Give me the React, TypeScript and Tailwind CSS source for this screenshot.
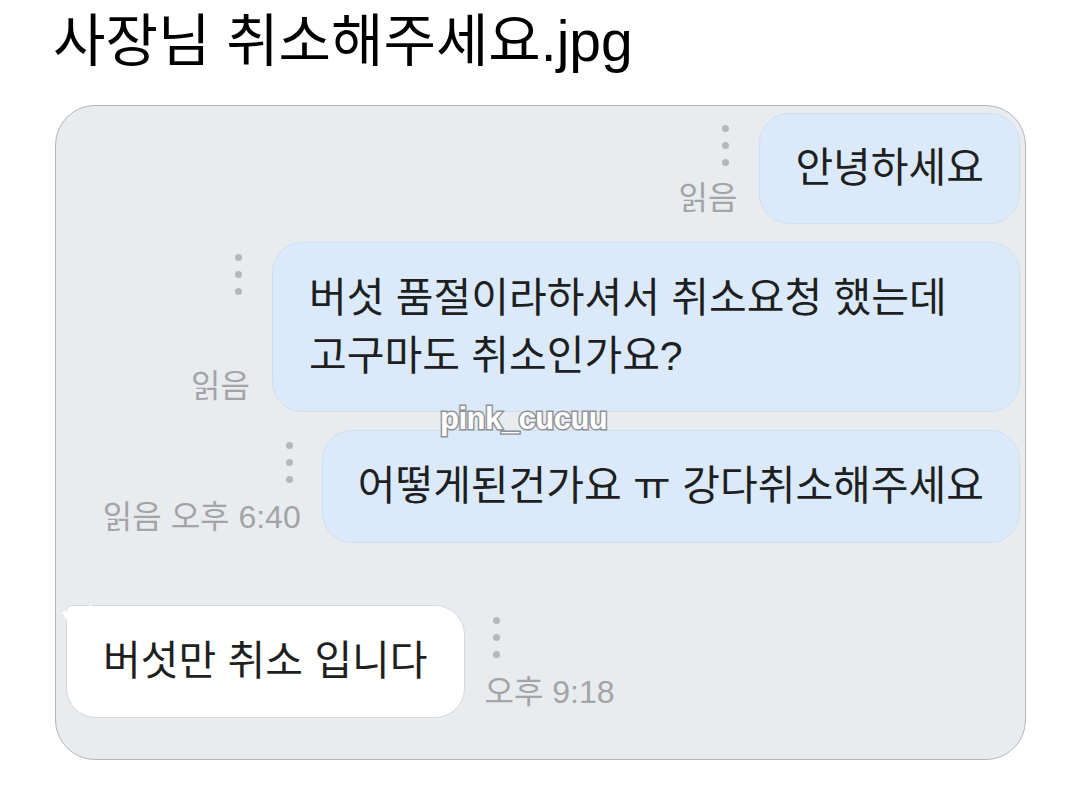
const font = { fontFamily: '"Liberation Sans", "Noto Sans CJK KR", sans-serif' };

function Dots({ side }: { side: "left" | "right" }) {
  return (
    <div className={`flex flex-col gap-[10px] ${side === "right" ? "mr-[8px]" : "ml-[8px]"}`}>
      <span className="block size-[7px] rounded-full bg-[#b4b7bb]" />
      <span className="block size-[7px] rounded-full bg-[#b4b7bb]" />
      <span className="block size-[7px] rounded-full bg-[#b4b7bb]" />
    </div>
  );
}

function Meta({ text, side }: { text: string; side: "left" | "right" }) {
  return (
    <div
      className={`flex flex-col justify-between self-stretch pt-[12px] pb-[10px] ${
        side === "right" ? "items-end" : "items-start"
      }`}
    >
      <Dots side={side} />
      <span className="text-[32px] leading-[32px] text-[#a2a4a7] whitespace-nowrap">{text}</span>
    </div>
  );
}

export default function App() {
  return (
    <div className="w-[1080px] h-[799px] bg-white text-[#1e1f21]" style={font}>
      <h1 className="pl-[53px] pt-[6px] text-[57px] leading-[70px] font-normal text-black">
        사장님 취소해주세요.jpg
      </h1>
      <div className="relative ml-[55px] mt-[29px] flex h-[655px] w-[971px] flex-col rounded-[40px] border border-[#b3b6ba] bg-[#e9ecef] pt-[7px] pl-[10px] pr-[5px]">
        <div className="flex justify-end gap-[22px]">
          <Meta text="읽음" side="right" />
          <div className="flex h-[111px] items-center rounded-[30px] border border-[#cfdff0] bg-[#dbeafb] px-[35px] text-[41px]">
            안녕하세요
          </div>
        </div>
        <div className="mt-[18px] flex justify-end gap-[22px]">
          <Meta text="읽음" side="right" />
          <div className="flex h-[170px] w-[748px] items-center rounded-[30px] border border-[#cfdff0] bg-[#dbeafb] px-[36px] text-[41px] leading-[58px]">
            <p>
              버섯 품절이라하셔서 취소요청 했는데
              <br />
              고구마도 취소인가요?
            </p>
          </div>
        </div>
        <div className="mt-[18px] flex justify-end gap-[21px]">
          <Meta text="읽음 오후 6:40" side="right" />
          <div className="flex h-[113px] items-center rounded-[30px] border border-[#cfdff0] bg-[#dbeafb] px-[35px] text-[41px]">
            어떻게된건가요 ㅠ 강다취소해주세요
          </div>
        </div>
        <div className="mt-[62px] flex justify-start gap-[20px]">
          <div className="relative flex h-[113px] items-center rounded-[30px] rounded-tl-[6px] border border-[#d5d8dc] bg-white px-[36px] text-[41px]">
            <svg className="absolute -left-[5px] -top-[1px]" width="30" height="16" viewBox="0 0 30 16">
              <path d="M0 7 L30 0 L30 16 L5 16 Z" fill="#ffffff" />
            </svg>
            버섯만 취소 입니다
          </div>
          <Meta text="오후 9:18" side="left" />
        </div>
        <span
          className="absolute left-[384px] top-[290px] text-[31px] font-bold tracking-[-0.5px] text-white"
          style={{ WebkitTextStroke: "3px #8f9297", paintOrder: "stroke fill" }}
        >
          pink_cucuu
        </span>
      </div>
    </div>
  );
}
